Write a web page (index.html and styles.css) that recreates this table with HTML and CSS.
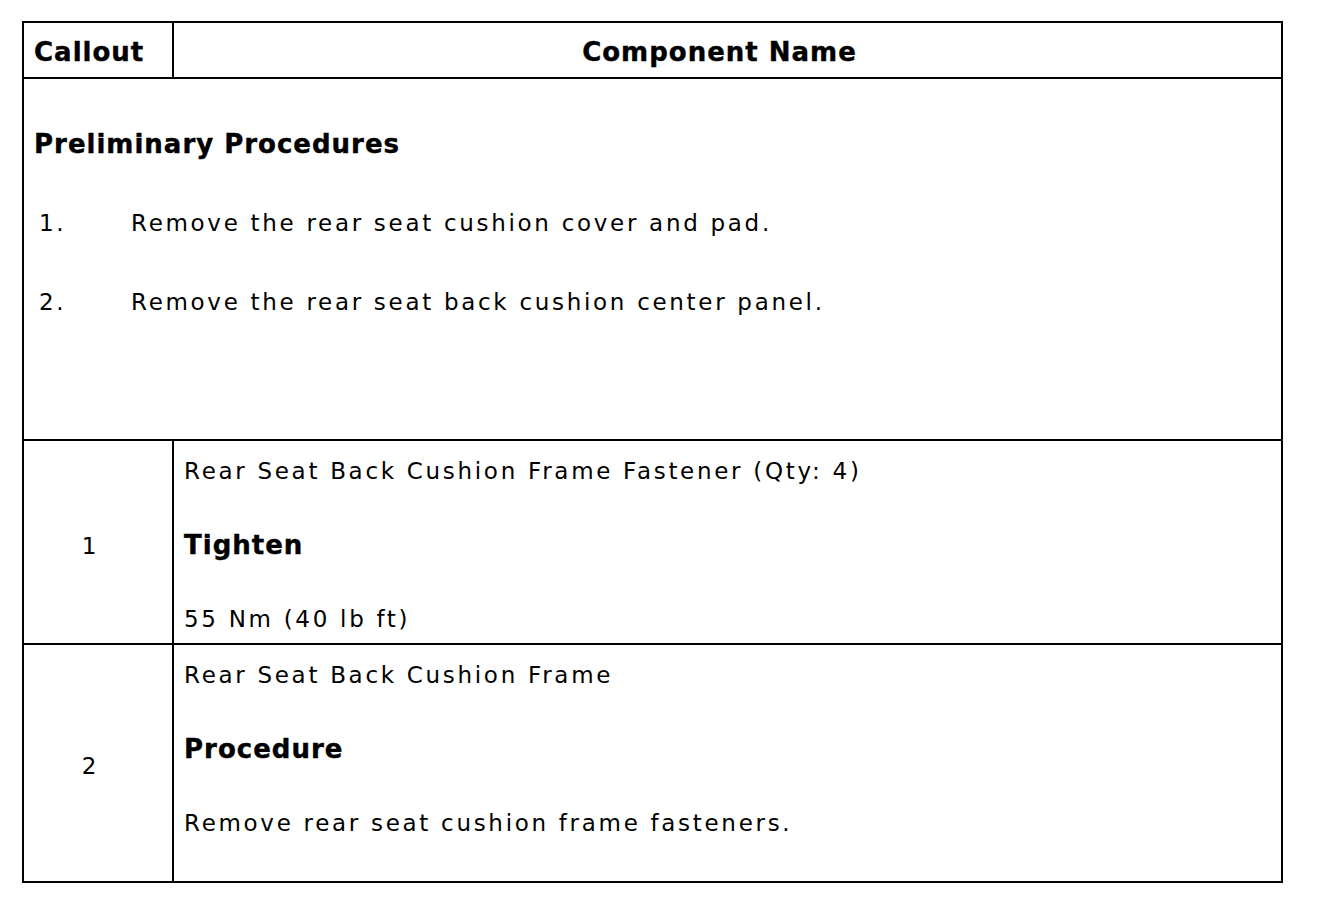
FILE: index.html
```html
<!DOCTYPE html>
<html>
<head>
<meta charset="utf-8">
<link rel="stylesheet" href="styles.css">
</head>
<body>
<table class="proc">
  <colgroup>
    <col class="c1">
    <col class="c2">
  </colgroup>
  <thead>
    <tr>
      <th class="h-callout">Callout</th>
      <th class="h-name">Component Name</th>
    </tr>
  </thead>
  <tbody>
    <tr>
      <td colspan="2" class="prelim">
        <div class="prelim-title">Preliminary Procedures</div>
        <ol class="steps">
          <li class="s1"><span class="num">1.</span><span class="txt">Remove the rear seat cushion cover and pad.</span></li>
          <li class="s2"><span class="num">2.</span><span class="txt">Remove the rear seat back cushion center panel.</span></li>
        </ol>
      </td>
    </tr>
    <tr class="row1">
      <td class="callout">1</td>
      <td class="detail">
        <div class="lines">
          <p>Rear Seat Back Cushion Frame Fastener (Qty: 4)</p>
          <p class="b">Tighten</p>
          <p>55 Nm (40 lb ft)</p>
        </div>
      </td>
    </tr>
    <tr class="row2">
      <td class="callout">2</td>
      <td class="detail">
        <div class="lines">
          <p>Rear Seat Back Cushion Frame</p>
          <p class="b">Procedure</p>
          <p>Remove rear seat cushion frame fasteners.</p>
        </div>
      </td>
    </tr>
  </tbody>
</table>
</body>
</html>
```

FILE: styles.css
```css
html, body {
  margin: 0;
  padding: 0;
  background: #fff;
}
body {
  padding: 21px 0 0 22px;
  font-family: "DejaVu Sans", Verdana, sans-serif;
  font-size: 23px;
  letter-spacing: 2.7px;
  color: #000;
}
.proc {
  border-collapse: separate;
  border-spacing: 0;
  table-layout: fixed;
  width: 1261px;
  border-top: 2px solid #000;
  border-left: 2px solid #000;
}
.c1 { width: 150px; }
.c2 { width: 1109px; }
.proc th, .proc td {
  box-sizing: border-box;
  border-right: 2px solid #000;
  border-bottom: 2px solid #000;
  padding: 0;
  line-height: 30px;
}
.proc th {
  font-size: 26px;
  font-weight: bold;
  letter-spacing: 1px;
  -webkit-text-stroke: 0.4px #000;
  padding-top: 14px;
  padding-bottom: 10px;
  vertical-align: top;
}
.h-callout {
  text-align: left;
  padding-left: 10px !important;
}
.h-name {
  text-align: center;
  padding-right: 16px !important;
}
.prelim {
  vertical-align: top;
  padding: 50px 10px 122px 10px !important;
}
.prelim-title {
  font-size: 26px;
  font-weight: bold;
  letter-spacing: 1px;
  -webkit-text-stroke: 0.4px #000;
  line-height: 30px;
}
.steps {
  list-style: none;
  margin: 0;
  padding: 0;
}
.steps li {
  display: flex;
  line-height: 30px;
}
.steps .s1 { margin-top: 49px; }
.steps .s2 { margin-top: 49px; }
.steps .num {
  flex: 0 0 92px;
  padding-left: 5px;
}
.callout {
  text-align: center;
  vertical-align: middle;
  padding-right: 15px !important;
}
.row1 .callout { padding-top: 8px !important; }
.row2 .callout { padding-top: 6px !important; }
.detail {
  vertical-align: top;
  padding-left: 10px !important;
  padding-right: 10px !important;
}
.row1 .detail {
  padding-top: 15px !important;
  padding-bottom: 9px !important;
}
.row2 .detail {
  padding-top: 15px !important;
  padding-bottom: 43px !important;
}
.lines {
  display: flex;
  flex-direction: column;
  gap: 44px;
}
.lines p {
  margin: 0;
  height: 30px;
  line-height: 30px;
}
.lines .b {
  font-size: 26px;
  font-weight: bold;
  letter-spacing: 1px;
  -webkit-text-stroke: 0.4px #000;
}
```
